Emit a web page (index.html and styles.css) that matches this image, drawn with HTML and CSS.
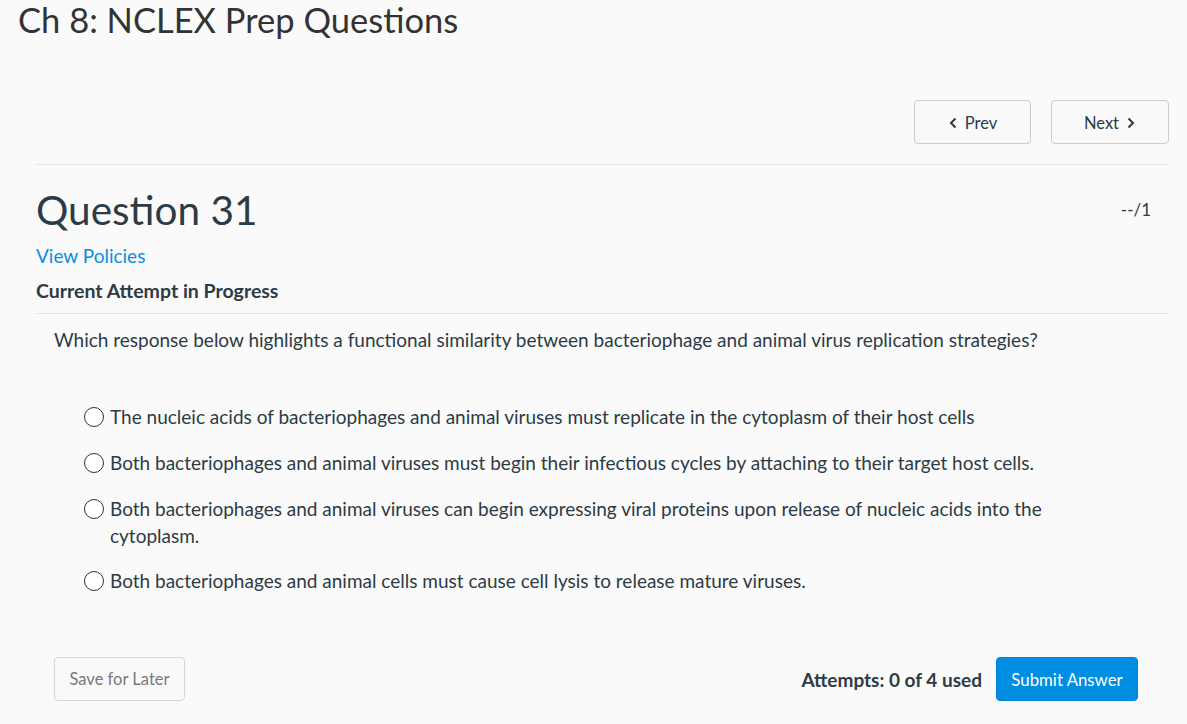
FILE: index.html
```html
<!DOCTYPE html>
<html lang="en">
<head>
<meta charset="utf-8">
<title>Ch 8: NCLEX Prep Questions</title>
<link rel="stylesheet" href="styles.css">
</head>
<body>
<h1 class="page-title">Ch 8: NCLEX Prep Questions</h1>
<main class="quiz">
  <nav class="pager">
    <button class="btn pager-btn"><svg class="chev" viewBox="0 0 10 14" width="10" height="14"><path d="M7.5 2.5 L3 7 L7.5 11.5" fill="none" stroke="currentColor" stroke-width="2"/></svg>Prev</button>
    <button class="btn pager-btn">Next<svg class="chev" viewBox="0 0 10 14" width="10" height="14"><path d="M2.5 2.5 L7 7 L2.5 11.5" fill="none" stroke="currentColor" stroke-width="2"/></svg></button>
  </nav>
  <header class="q-head">
    <h2 class="q-title">Question 31</h2>
    <span class="q-score">--/1</span>
  </header>
  <a class="policies" href="#">View Policies</a>
  <div class="attempt">Current Attempt in Progress</div>
  <section class="q-body">
    <p class="q-text">Which response below highlights a functional similarity between bacteriophage and animal virus replication strategies?</p>
    <ul class="answers">
      <li class="answer"><span class="radio"></span><span>The nucleic acids of bacteriophages and animal viruses must replicate in the cytoplasm of their host cells</span></li>
      <li class="answer"><span class="radio"></span><span>Both bacteriophages and animal viruses must begin their infectious cycles by attaching to their target host cells.</span></li>
      <li class="answer"><span class="radio"></span><span>Both bacteriophages and animal viruses can begin expressing viral proteins upon release of nucleic acids into the cytoplasm.</span></li>
      <li class="answer"><span class="radio"></span><span>Both bacteriophages and animal cells must cause cell lysis to release mature viruses.</span></li>
    </ul>
  </section>
  <footer class="actions">
    <button class="btn save-btn">Save for Later</button>
    <div class="submit-group">
      <span class="attempts">Attempts: 0 of 4 used</span>
      <button class="btn submit-btn">Submit Answer</button>
    </div>
  </footer>
</main>
</body>
</html>
```
FILE: styles.css
```css
* { box-sizing: border-box; }
html, body { margin: 0; padding: 0; }
body {
  background: #fafafa;
  font-family: Lato, "Open Sans", sans-serif;
  color: #2d3b45;
  width: 1187px;
  height: 724px;
  overflow: hidden;
}
.page-title {
  margin: 0;
  padding: 0 0 0 18px;
  font-size: 34.5px;
  font-weight: 400;
  line-height: 40px;
  color: #333;
}
.quiz {
  padding: 0 18px 0 36px;
}
.pager {
  display: flex;
  justify-content: flex-end;
  gap: 20px;
  margin-top: 60px;
  padding-bottom: 20px;
  border-bottom: 1px solid #e6e6e6;
}
.btn {
  font-family: Lato, "Open Sans", sans-serif;
  height: 44px;
  border-radius: 4px;
  font-size: 16.5px;
  cursor: pointer;
}
.pager-btn {
  width: 118px;
  background: #f9f9f9;
  border: 1px solid #c7cdd1;
  color: #2d3b45;
  display: flex;
  align-items: center;
  justify-content: center;
  gap: 7px;
  padding-top: 2px;
}
.pager-btn:first-child { width: 117px; }
.chev { display: block; }
.q-head {
  display: flex;
  justify-content: space-between;
  align-items: flex-start;
  margin-top: 20px;
}
.q-title {
  margin: 0;
  font-size: 40.5px;
  font-weight: 400;
  line-height: 50px;
}
.q-score {
  font-size: 17px;
  margin-top: 14px;
  padding-right: 18px;
}
.policies {
  display: block;
  margin-top: 8px;
  font-size: 19px;
  line-height: 26px;
  color: #0b8ee0;
  text-decoration: none;
}
.attempt {
  margin-top: 10px;
  font-size: 19.5px;
  font-weight: 700;
  line-height: 24px;
  padding-bottom: 10px;
  border-bottom: 1px solid #e6e6e6;
}
.q-body {
  padding: 12px 0 0 18px;
}
.q-text {
  margin: 0;
  font-size: 19px;
  line-height: 28px;
}
.answers {
  list-style: none;
  margin: 49px 0 0 0;
  padding: 0 100px 0 30px;
  display: flex;
  flex-direction: column;
  gap: 19px;
}
.answer {
  display: flex;
  align-items: flex-start;
  font-size: 19px;
  line-height: 27px;
}
.answer:last-child { margin-top: -1px; }
.radio {
  flex: none;
  width: 20px;
  height: 20px;
  margin: 4px 6px 0 0;
  border: 1.5px solid #333;
  border-radius: 50%;
  background: #fff;
}
.actions {
  display: flex;
  justify-content: space-between;
  align-items: center;
  margin-top: 63px;
  padding: 0 31px 0 18px;
}
.save-btn {
  width: 131px;
  background: #f9f9f9;
  border: 1px solid #d6d6d6;
  color: #7a7a7a;
}
.submit-group {
  display: flex;
  align-items: center;
  gap: 14px;
}
.attempts {
  font-size: 19px;
  font-weight: 700;
}
.submit-btn {
  width: 142px;
  background: #008ee2;
  border: 1px solid #0084d1;
  color: #fff;
  font-size: 16.8px;
}
```
